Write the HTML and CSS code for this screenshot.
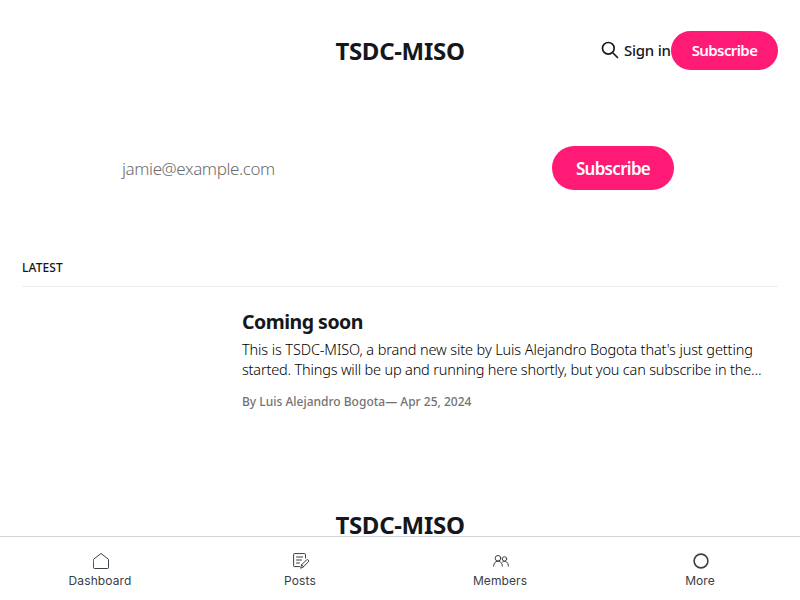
FILE: index.html
```html
<!DOCTYPE html>
<html lang="en">
<head>
<meta charset="utf-8">
<title>TSDC-MISO</title>
<link rel="stylesheet" href="styles.css">
</head>
<body>
<div class="site">
  <header class="head">
    <a class="logo">TSDC-MISO</a>
    <div class="actions">
      <svg class="search" viewBox="0 0 24 24" width="20" height="20" fill="none" stroke="currentColor" stroke-width="2"><path stroke-linecap="round" stroke-linejoin="round" d="M21 21l-6-6m2-5a7 7 0 11-14 0 7 7 0 0114 0z"/></svg>
      <a class="signin">Sign in</a>
      <a class="btn btn-small">Subscribe</a>
    </div>
  </header>
  <form class="signup">
    <span class="email">jamie@example.com</span>
    <a class="btn btn-large">Subscribe</a>
  </form>
  <main class="feed">
    <h2 class="latest">Latest</h2>
    <article class="card">
      <h3 class="title">Coming soon</h3>
      <p class="excerpt"><span class="line line-a">This is TSDC-MISO, a brand new site by Luis Alejandro Bogota that's just getting</span><span class="line line-b">started. Things will be up and running here shortly, but you can subscribe in the…</span></p>
      <p class="meta">By Luis Alejandro Bogota— Apr 25, 2024</p>
    </article>
  </main>
  <footer class="foot"><a class="logo">TSDC-MISO</a></footer>
</div>
<nav class="tabs">
  <a class="tab"><svg width="16" height="16" viewBox="0 0 16 16"><path d="M.5 6.300 8 .5l7.500 5.800v8.400a.8.800 0 0 1-.8.800H1.300a.8.800 0 0 1-.8-.8z"/></svg><span class="tab-text">Dashboard</span></a>
  <a class="tab"><svg width="16" height="16" viewBox="0 0 16 16"><path d="M12.500 5V1.300a.7.700 0 0 0-.7-.7H1.300a.7.700 0 0 0-.7.700v11.600a.7.700 0 0 0 .7.700h5.200M3.500 4h6.200M3.500 7h5M3.500 10h3M7.800 14.900l.8-3.100 4.800-4.800a1.250 1.250 0 0 1 1.900 1.900l-4.900 4.900zM8.600 11.800l2 2"/></svg><span class="tab-text">Posts</span></a>
  <a class="tab"><svg width="16" height="16" viewBox="0 0 16 16"><circle cx="5" cy="5.300" r="2.800"/><circle cx="11.500" cy="5.900" r="2.200"/><path d="M.6 13.100c0-2.900 1.700-4.900 4.400-4.900s4.400 2 4.400 4.900M9.700 8.900c3-1.700 5.700.3 5.700 4.200"/></svg><span class="tab-text">Members</span></a>
  <a class="tab"><svg width="16" height="16" viewBox="0 0 16 16"><circle cx="8" cy="8" r="6.900" stroke-width="1.600"/></svg><span class="tab-text">More</span></a>
</nav>
</body>
</html>
```
FILE: styles.css
```css
* { box-sizing: border-box; }
html, body { margin: 0; height: 100%; overflow: hidden; }
body {
  display: flex;
  flex-direction: column;
  background: #fff;
  color: #15171a;
  font-family: "Noto Sans", sans-serif;
}
.site { flex: 1; min-height: 0; overflow: hidden; padding: 0 22px; }
.head { height: 100px; display: grid; grid-template-columns: 1fr auto 1fr; align-items: center; }
.logo { grid-column: 2; font-size: 24px; line-height: 32px; font-weight: 700; letter-spacing: -0.3px; white-space: nowrap; }
.head .logo { padding-top: 2px; }
.actions { grid-column: 3; display: flex; align-items: center; justify-content: flex-end; white-space: nowrap; }
.search { margin-right: 4px; }
.signin { font-size: 15px; font-weight: 500; width: 47px; letter-spacing: -0.25px; }
.btn { display: flex; align-items: center; justify-content: center; background: #ff1a75; color: #fff; font-weight: 600; border-radius: 30px; }
.btn-small { width: 107px; height: 39px; font-size: 15px; letter-spacing: -0.6px; }
.btn-large { width: 122px; height: 44px; padding-top: 1px; font-size: 17px; letter-spacing: -0.7px; }
.signup { display: flex; align-items: center; justify-content: space-between; margin: 46px 104px 0 100px; height: 44px; }
.email { font-size: 17px; font-weight: 300; color: #6c6c6c; letter-spacing: -0.4px; }
.feed { margin-top: 70px; }
.latest { margin: 0; height: 27px; border-bottom: 1px solid #ebebeb; font-size: 12px; line-height: 16px; font-weight: 500; letter-spacing: 0.1px; text-transform: uppercase; }
.card { margin: 22px 0 0 220px; height: 200px; white-space: nowrap; }
.title { margin: 0; font-size: 19.500px; line-height: 26px; font-weight: 700; letter-spacing: -0.500px; }
.excerpt { margin: 4px 0 0; font-size: 14.500px; line-height: 20px; font-weight: 300; color: #000; }
.line { display: block; }
.line-a { letter-spacing: -0.115px; }
.line-b { letter-spacing: -0.180px; }
.meta { margin: 14px 0 0; font-size: 12px; line-height: 17px; font-weight: 500; color: #737373; }
.foot { display: flex; justify-content: center; }
.tabs { height: 64px; flex: none; display: grid; grid-template-columns: repeat(4, 1fr); border-top: 1px solid #ced4d9; background: #fff; }
.tab { display: flex; flex-direction: column; align-items: center; padding-top: 16px; color: #394047; font: 400 12px/16px Inter, sans-serif; letter-spacing: 0.1px; }
.tab svg { display: block; margin-left: 1px; fill: none; stroke: currentColor; stroke-width: 1; stroke-linejoin: round; stroke-linecap: round; }
.tab-text { margin-top: 4px; }
```
